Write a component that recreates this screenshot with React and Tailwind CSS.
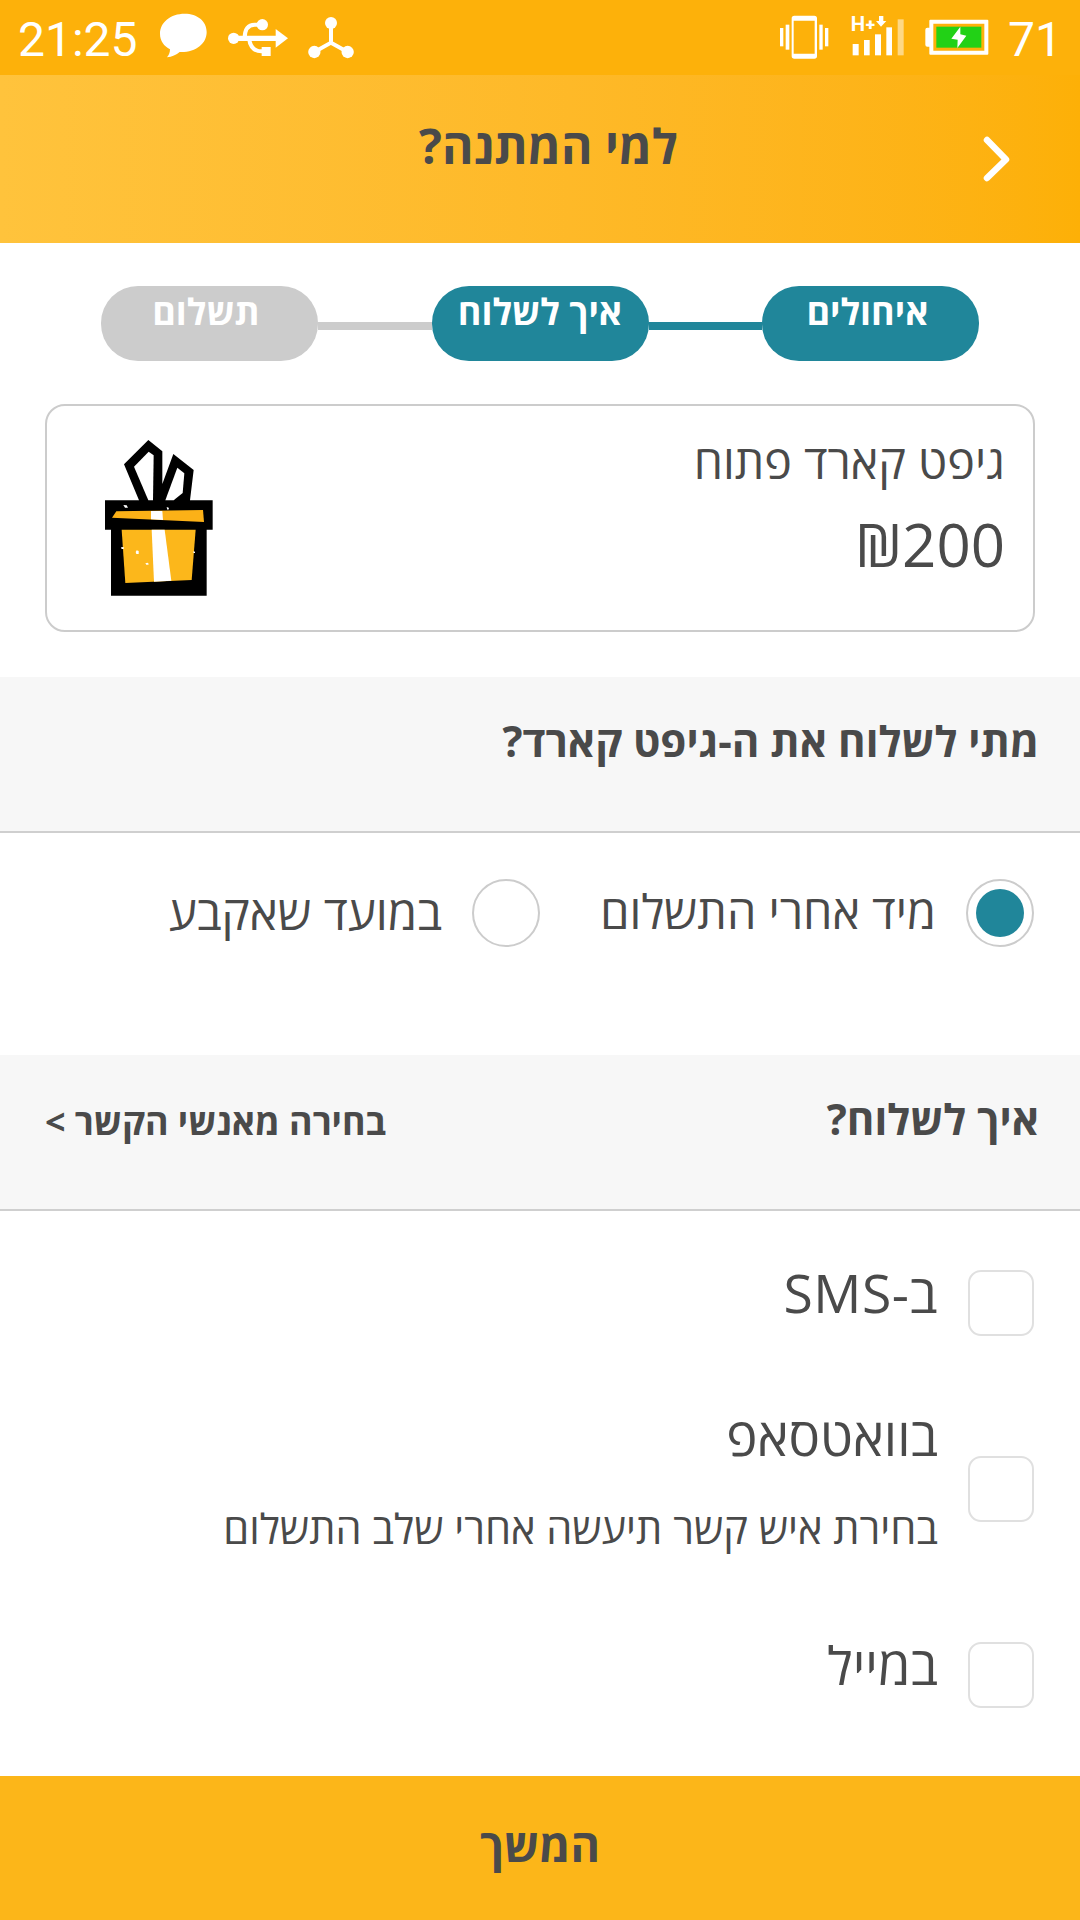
const FONT = "font-['Open_Sans','Noto_Sans',sans-serif]";

function BubbleIcon() {
  return (
    <svg className="h-[45px] w-[48px]" viewBox="478 40 144 135" fill="#fff">
      <path d="M555 42C513 42 481 68 481 102C481 124 493 139 511 149C511 158 508 166 502 173C517 172 530 165 540 157C588 159 621 132 621 97C621 64 593 42 555 42Z" />
    </svg>
  );
}

function UsbIcon() {
  return (
    <svg className="h-[39px] w-[62px]" viewBox="679 53 186 117" fill="none" stroke="#fff" strokeWidth="12">
      <path d="M698 114H828" strokeWidth="16" />
      <path d="M732 114C732 86 742 73 762 73H780" />
      <path d="M745 114C748 138 758 153 782 153H790" />
      <circle cx="699" cy="114" r="17" fill="#fff" stroke="none" />
      <circle cx="785" cy="73" r="17" fill="#fff" stroke="none" />
      <rect x="783" y="140" width="27" height="27" fill="#fff" stroke="none" />
      <path d="M825 86L862 114L825 142Z" fill="#fff" stroke="none" />
    </svg>
  );
}

function HubIcon() {
  return (
    <svg className="h-[43px] w-[48px]" viewBox="921 48 144 129" fill="#fff">
      <path d="M993 70V128L943 156M993 128L1043 156" fill="none" stroke="#fff" strokeWidth="12" />
      <circle cx="993" cy="69" r="18" />
      <circle cx="943" cy="156" r="18.5" />
      <circle cx="1043" cy="156" r="18.5" />
    </svg>
  );
}

function VibrateIcon() {
  return (
    <svg className="h-[46px] w-[50px]" viewBox="58 43 150 138" fill="#fff">
      <path fillRule="evenodd" d="M104 48H164Q172 48 172 56V170Q172 177 164 177H104Q96 177 96 170V56Q96 48 104 48ZM102 63V162H165V63Z" />
      <rect x="78" y="75" width="11" height="75" />
      <rect x="179" y="75" width="10" height="75" />
      <rect x="61" y="85" width="10" height="55" />
      <rect x="196" y="85" width="10" height="55" />
    </svg>
  );
}

function SignalIcon() {
  return (
    <svg className="h-[42px] w-[54px] overflow-visible" viewBox="273 45 162 126" fill="#fff">
      <text x="272" y="94" fontFamily="Roboto, sans-serif" fontWeight="700" fontSize="61">H</text>
      <text x="317" y="91" fontFamily="Roboto, sans-serif" fontWeight="900" fontSize="52">+</text>
      <path d="M357 48H370V63H379L363 80L348 63H357Z" />
      <rect x="278" y="132" width="18" height="34" />
      <rect x="312" y="120" width="17" height="46" />
      <rect x="345" y="103" width="18" height="63" />
      <rect x="379" y="82" width="17" height="84" />
      <rect x="413" y="58" width="18" height="108" opacity="0.5" />
    </svg>
  );
}

function BatteryIcon() {
  return (
    <svg className="h-[36px] w-[64px]" viewBox="494 58 192 108" fill="#fff">
      <path fillRule="evenodd" d="M510 60H681Q684 60 684 63V162Q684 165 681 165H510Q507 165 507 162V141H501Q495 141 495 135V90Q495 84 501 84H507V63Q507 60 510 60ZM519 72V153H672V72Z" />
      <rect x="528" y="81" width="135" height="63" fill="#22d116" />
      <path d="M600 81L573 117L592 120L591 145L618 108L600 104Z" />
    </svg>
  );
}

function StatusBar() {
  return (
    <div dir="ltr" className="flex h-[75px] bg-[#fdb10a] pl-[18px] font-[Roboto,sans-serif] text-[48px] leading-none text-white">
      <span className="mt-[16px] w-[120px]">21:25</span>
      <div className="ml-[21px] mt-[13px]"><BubbleIcon /></div>
      <div className="ml-[20px] mt-[18px]"><UsbIcon /></div>
      <div className="ml-[18px] mt-[16px]"><HubIcon /></div>
      <div className="ml-auto mt-[14px]"><VibrateIcon /></div>
      <div className="ml-[22px] mt-[15px]"><SignalIcon /></div>
      <div className="ml-[20px] mt-[19px]"><BatteryIcon /></div>
      <span className="ml-[19px] mr-[18px] mt-[16px] w-[54px]">71</span>
    </div>
  );
}

function Header() {
  return (
    <header className="flex h-[168px] bg-linear-to-r from-[#ffc33c] to-[#fdb007]">
      <svg className="mr-[69px] mt-[60px] h-[49px] w-[30px] shrink-0" viewBox="0 0 30 49" fill="none" stroke="#fff" strokeWidth="6.5" strokeLinecap="round">
        <path d="M6 5L25 24.500L6 43" strokeLinejoin="round" />
      </svg>
      <h1 className="mr-[303px] mt-[47px] whitespace-nowrap text-[48px] font-bold leading-none">למי המתנה?</h1>
    </header>
  );
}

function Step({ label, className }) {
  return (
    <div className={`h-[75px] w-[217px] rounded-[37px] pt-[8px] text-center text-[36px] font-bold leading-none text-white ${className}`}>
      {label}
    </div>
  );
}

function Steps() {
  return (
    <div className="flex h-[161px] px-[101px] pt-[43px]">
      <Step label="איחולים" className="bg-[#20869a] pr-[6px]" />
      <div className="mt-[36px] h-2 flex-1 bg-[#20869a]" />
      <Step label="איך לשלוח" className="bg-[#20869a]" />
      <div className="mt-[36px] h-2 flex-1 bg-[#cccccc]" />
      <Step label="תשלום" className="bg-[#cccccc] pr-[7px]" />
    </div>
  );
}

function GiftIcon() {
  return (
    <svg className="h-[156px] w-[108px]" viewBox="225 150 324 468">
      <path d="M225 331H327L282 223L355 150L397 184V282L430 192L491 240L480 331H548V419H530V617H243V419H225Z" fill="#000" />
      <path d="M312 230L356 185L371 196L369 331H355Z" fill="#fff" />
      <path d="M442 233L463 250L458 309L431 331H406Z" fill="#fff" />
      <path d="M259 364L519 360L522 396L246 383Z" fill="#fcb117" />
      <path d="M275 419H497L485 570L286 579Z" fill="#fcb71b" />
      <path d="M363 363H397L399 390L363 388Z" fill="#fff" />
      <path d="M365 419H404L424 572L372 575Z" fill="#fff" />
      <path d="M280 345L290 346L294 353L285 353Z" fill="#fff" />
      <path d="M410 351L416 353L417 358L412 359Z" fill="#fff" />
      <path d="M273 472L281 471V477H275Z" fill="#fff" />
      <path d="M320 481L326 483V492L319 492L317 486Z" fill="#fff" />
      <path d="M346 520L353 518L357 523L350 525Z" fill="#fff" />
      <path d="M490 484L495 485V489H490Z" fill="#fff" />
    </svg>
  );
}

function GiftCard() {
  return (
    <div className="mx-[45px] flex h-[228px] justify-between rounded-[20px] border-2 border-[#cccccc] pl-[58px] pr-[28px]">
      <div className="pt-[32px] leading-none">
        <div className="text-[46.6px] leading-[47px]">גיפט קארד פתוח</div>
        <div className="mt-[29px] text-[60px] leading-none">₪200</div>
      </div>
      <div className="pt-[34px]"><GiftIcon /></div>
    </div>
  );
}

function SectionHeader({ title, children }) {
  return (
    <div className="flex h-[156px] justify-between border-b-2 border-[#cfcfcf] bg-[#f7f7f7] pl-[45px] pr-[41px]">
      <h2 className="mt-[43px] text-[42.1px] font-bold leading-[42px]">{title}</h2>
      {children}
    </div>
  );
}

function Radio({ label, checked, className }) {
  return (
    <label className={`flex ${className}`}>
      <span className="flex size-[68px] shrink-0 items-center justify-center rounded-full border-2 border-[#cccccc]">
        {checked && <span className="size-[48px] rounded-full bg-[#20869a]" />}
      </span>
      <span className="mt-[9px] whitespace-nowrap leading-[47px]">{label}</span>
    </label>
  );
}

function Checkbox() {
  return <span className="size-[66px] shrink-0 rounded-[13px] border-2 border-[#e0e0e0]" />;
}

export default function App() {
  return (
    <div dir="rtl" className={`flex h-[1920px] w-[1080px] flex-col overflow-hidden bg-white text-[#4a4a4a] ${FONT}`}>
      <StatusBar />
      <Header />
      <Steps />
      <GiftCard />
      <div className="mt-[45px]">
        <SectionHeader title="מתי לשלוח את ה-גיפט קארד?" />
      </div>
      <div className="flex h-[222px] pr-[46px] pt-[46px]">
        <Radio label="מיד אחרי התשלום" checked className="w-[494px] gap-[30px] text-[46.8px]" />
        <Radio label="במועד שאקבע" className="gap-[30px] text-[47.5px]" />
      </div>
      <SectionHeader title="איך לשלוח?">
        <a className="mt-[49px] text-[35.9px] font-bold leading-[36px]">{"בחירה מאנשי הקשר >"}</a>
      </SectionHeader>
      <div className="flex flex-1 flex-col pr-[46px] pt-[59px]">
        <div className="flex h-[186px] gap-[30px]">
          <Checkbox />
          <span className="-mt-[4px] text-[53.5px] leading-[53px] tracking-[0.5px]">ב-SMS</span>
        </div>
        <div className="flex h-[186px] gap-[30px]">
          <Checkbox />
          <div className="-mt-[47px]">
            <div className="text-[52.6px] leading-[53px]">בוואטסאפ</div>
            <div className="mt-[45px] text-[41.5px] leading-[42px]">בחירת איש קשר תיעשה אחרי שלב התשלום</div>
          </div>
        </div>
        <div className="flex gap-[30px]">
          <Checkbox />
          <span className="-mt-[4px] text-[52.5px] leading-[53px]">במייל</span>
        </div>
      </div>
      <button className="h-[144px] bg-[#fcb619] pb-[8px] text-center text-[45px] font-bold leading-none">המשך</button>
    </div>
  );
}
